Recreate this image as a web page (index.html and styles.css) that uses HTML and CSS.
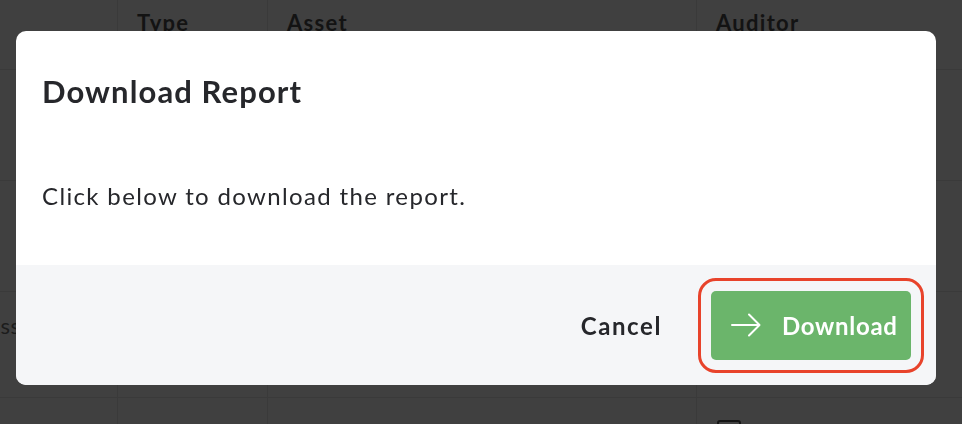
FILE: index.html
```html
<!doctype html>
<html>
    <head>
        <title>Download Report</title>
        <link rel="stylesheet" href="styles.css">
    </head>
    <body>
        <div class="table-scroll">
            <div class="table">
                <div class="cell head"></div>
                <div class="cell head">Type</div>
                <div class="cell head">Asset</div>
                <div class="cell head">Auditor</div>
                <div class="cell"></div>
                <div class="cell"></div>
                <div class="cell"></div>
                <div class="cell"></div>
                <div class="cell"></div>
                <div class="cell"></div>
                <div class="cell"></div>
                <div class="cell"></div>
                <div class="cell status">Processing</div>
                <div class="cell"></div>
                <div class="cell"></div>
                <div class="cell"></div>
                <div class="cell"></div>
                <div class="cell"></div>
                <div class="cell"></div>
                <div class="cell"><span class="checkbox"></span></div>
            </div>
        </div>

        <div class="overlay">
            <div class="modal">
                <div class="modal-body">
                    <h2>Download Report</h2>
                    <p>Click below to download the report.</p>
                </div>
                <div class="modal-footer">
                    <button class="btn-cancel">Cancel</button>
                    <button class="btn-download">
                        <svg width="30" height="24" viewBox="0 0 30 24" fill="none" stroke="#fff" stroke-width="2" stroke-linecap="round" stroke-linejoin="round">
                            <path d="M1 12h27" />
                            <path d="M18 1.5 28.5 12 18 22.5" />
                        </svg>
                        <span>Download</span>
                    </button>
                </div>
            </div>
        </div>
    </body>
</html>
```

FILE: styles.css
```css
body {
    background-color: #404040;

    margin: 0;
    overflow: hidden;
    height: 100vh;

    font-family: Lato, "Open Sans", sans-serif;
}

.table-scroll {
    margin-left: -120px;
}

.table {
    display: grid;
    grid-template-columns: 120px 117px 150px 429px 300px;
    grid-template-rows: 70px 111px 111px 106px;
}

.cell {
    color: #131313;
    font-size: 22px;
    letter-spacing: 0.5px;

    border-left: 1px solid #3a3a3a;
    border-bottom: 1px solid #3a3a3a;

    padding: 0 20px;
    box-sizing: border-box;
}

.head {
    font-weight: bold;
    letter-spacing: 1.3px;
    padding: 9px 0 0 19px;
}

.table .cell:nth-child(4n + 1) {
    grid-column: 1 / 3;
}

.status {
    padding: 20px 0 0 62px;
    color: #1c1c1c;
    white-space: nowrap;
}

.checkbox {
    display: block;
    width: 20px;
    height: 20px;
    margin-top: 22px;

    border: 2px solid #151515;
    border-radius: 3px;
}

.overlay {
    position: fixed;
    inset: 0;

    padding: 31px 0 0 16px;
}

.modal {
    width: 920px;

    background-color: #fff;
    border-radius: 10px;
    overflow: hidden;
}

.modal-body {
    padding: 42px 26px 55px;
    color: #26272b;
}

.modal-body h2 {
    font-size: 31px;
    font-weight: bold;
    line-height: 36px;
    letter-spacing: 1.1px;

    margin: 0 0 73px;
}

.modal-body p {
    font-size: 24px;
    line-height: 28px;
    letter-spacing: 1.35px;

    margin: 0;
}

.modal-footer {
    background-color: #f5f6f8;

    height: 120px;
    padding: 0 25px;
    box-sizing: border-box;

    display: flex;
    align-items: center;
    justify-content: flex-end;
    gap: 49px;
}

.modal-footer button {
    font-family: inherit;
    font-size: 24px;
    font-weight: bold;

    border: none;
    cursor: pointer;
}

.btn-cancel {
    background: none;
    color: #26272b;
    padding: 0;
    letter-spacing: 1.6px;
}

.btn-download {
    background-color: #6bb56b;
    color: #fff;

    width: 200px;
    height: 69px;
    padding: 0 16px 0 20px;

    border-radius: 5px;
    outline: 3px solid #e8432b;
    outline-offset: 10px;

    letter-spacing: 0.7px;
    white-space: nowrap;

    display: flex;
    align-items: center;
    gap: 21px;
}

.btn-download svg {
    flex-shrink: 0;
}
```
